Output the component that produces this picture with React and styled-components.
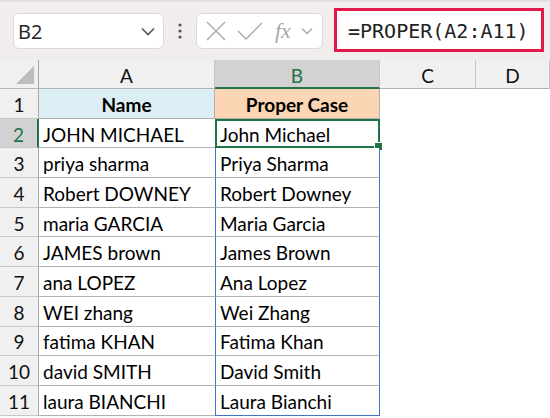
import React from 'react';
import styled, { createGlobalStyle, css } from 'styled-components';

const GREEN = '#217346';
const COLS = '39px 176px 165px 96px 1fr';

const GlobalStyle = createGlobalStyle`
  html, body {
    margin: 0;
    padding: 0;
    background: #ffffff;
    overflow: hidden;
  }
`;

const Page = styled.div`
  width: 550px;
  height: 418px;
  overflow: hidden;
  font-family: Lato, 'Noto Sans', sans-serif;
  color: #000;
`;

const FormulaBar = styled.div`
  height: 60px;
  box-sizing: border-box;
  background: #f1eded;
  border-top: 2px solid #e4e0e0;
  display: flex;
  align-items: center;
  padding-left: 13px;
`;

const Box = styled.div`
  height: 36px;
  box-sizing: border-box;
  background: #ffffff;
  border: 1px solid #dcd8d8;
  border-radius: 6px;
  display: flex;
  align-items: center;
`;

const NameBox = styled(Box)`
  width: 151px;
  padding: 0 8px 0 4px;
  justify-content: space-between;
  font-family: 'Open Sans', sans-serif;
  font-size: 20px;
  color: #222;
`;

const Dots = styled.div`
  width: 32px;
  display: flex;
  justify-content: center;
`;

const FxBox = styled(Box)`
  width: 127px;
  padding: 0 6px 0 8px;
  gap: 10px;
  color: #a8a8a8;
`;

const FxGlyph = styled.span`
  font-family: 'Liberation Serif', serif;
  font-style: italic;
  font-size: 22px;
  color: #a8a8a8;
  margin-left: 2px;
`;

const FormulaInput = styled.div`
  margin-left: 11px;
  width: 210px;
  height: 44px;
  box-sizing: border-box;
  border: 3px solid #e0194a;
  background: #ffffff;
  display: flex;
  align-items: center;
  padding-left: 11px;
  padding-top: 1px;
  font-family: 'DejaVu Sans Mono', monospace;
  font-size: 20px;
  color: #222;
  margin-top: -2px;
`;

const Row = styled.div`
  display: grid;
  grid-template-columns: ${COLS};
  height: ${(p) => p.$h};
`;

const ColHead = styled.div`
  background: ${(p) => (p.$active ? '#d2d2d2' : '#f0f0f0')};
  color: ${(p) => (p.$active ? GREEN : '#111')};
  border-right: 1px solid #c6c6c6;
  border-bottom: ${(p) => (p.$active ? `2px solid ${GREEN}` : '1px solid #b4b4b4')};
  box-sizing: border-box;
  display: flex;
  align-items: center;
  justify-content: center;
  padding-top: 3px;
  font-size: 19px;
  position: relative;
`;

const Corner = styled(ColHead)`
  border-right: 1px solid #a8a8a8;
`;

const Triangle = styled.div`
  position: absolute;
  right: 4px;
  bottom: 4px;
  width: 0;
  height: 0;
  border-left: 18px solid transparent;
  border-bottom: 18px solid #bdbdbd;
`;

const RowHead = styled.div`
  background: ${(p) => (p.$active ? '#d2d2d2' : '#f0f0f0')};
  color: ${(p) => (p.$active ? GREEN : '#111')};
  border-bottom: 1px solid #c6c6c6;
  border-right: ${(p) => (p.$active ? `2px solid ${GREEN}` : '1px solid #a8a8a8')};
  box-sizing: border-box;
  display: flex;
  align-items: center;
  justify-content: center;
  padding-top: 2px;
  font-size: 19px;
`;

const Cell = styled.div`
  box-sizing: border-box;
  border-bottom: 1px solid #b0b0b0;
  display: flex;
  align-items: center;
  padding: 2px 0 0 4px;
  font-size: 19px;
  white-space: nowrap;
  position: relative;
  background: ${(p) => p.$bg || '#ffffff'};
  ${(p) =>
    p.$head &&
    css`
      justify-content: center;
      padding-left: 0;
      font-weight: bold;
      border-right: 1px solid #b0b0b0;
    `}
  ${(p) =>
    p.$range &&
    css`
      border-left: 1px solid #4472c4;
      border-right: 1px solid #4472c4;
    `}
  ${(p) =>
    p.$last &&
    css`
      border-bottom: 1px solid #4472c4;
    `}
  ${(p) =>
    p.$selected &&
    css`
      border: 2px solid ${GREEN};
      padding-left: 3px;
    `}
`;

const Blank = styled.div`
  background: #ffffff;
`;

const FillHandle = styled.div`
  position: absolute;
  right: -5px;
  bottom: -5px;
  width: 7px;
  height: 7px;
  background: ${GREEN};
  border: 1px solid #ffffff;
`;

const Chevron = () => (
  <svg width="14" height="9" viewBox="0 0 14 9">
    <path d="M1 1.5 L7 7.5 L13 1.5" fill="none" stroke="#555" strokeWidth="1.6" />
  </svg>
);

const names = [
  ['JOHN MICHAEL', 'John Michael'],
  ['priya sharma', 'Priya Sharma'],
  ['Robert DOWNEY', 'Robert Downey'],
  ['maria GARCIA', 'Maria Garcia'],
  ['JAMES brown', 'James Brown'],
  ['ana LOPEZ', 'Ana Lopez'],
  ['WEI zhang', 'Wei Zhang'],
  ['fatima KHAN', 'Fatima Khan'],
  ['david SMITH', 'David Smith'],
  ['laura BIANCHI', 'Laura Bianchi'],
];

export default function App() {
  return (
    <Page>
      <GlobalStyle />
      <FormulaBar>
        <NameBox>
          <span>B2</span>
          <Chevron />
        </NameBox>
        <Dots>
          <svg width="4" height="16" viewBox="0 0 4 16">
            <circle cx="2" cy="2" r="1.6" fill="#555" />
            <circle cx="2" cy="8" r="1.6" fill="#555" />
            <circle cx="2" cy="14" r="1.6" fill="#555" />
          </svg>
        </Dots>
        <FxBox>
          <svg width="22" height="22" viewBox="0 0 22 22">
            <path d="M2 2 L20 20 M20 2 L2 20" stroke="#a8a8a8" strokeWidth="1.4" fill="none" />
          </svg>
          <svg width="26" height="20" viewBox="0 0 26 20">
            <path d="M1 10 L9 18 L25 2" stroke="#a8a8a8" strokeWidth="1.4" fill="none" />
          </svg>
          <FxGlyph>fx</FxGlyph>
          <svg width="12" height="8" viewBox="0 0 12 8">
            <path d="M1 1.5 L6 6.5 L11 1.5" fill="none" stroke="#a8a8a8" strokeWidth="1.4" />
          </svg>
        </FxBox>
        <FormulaInput>=PROPER(A2:A11)</FormulaInput>
      </FormulaBar>

      <Row $h="29px">
        <Corner>
          <Triangle />
        </Corner>
        <ColHead>A</ColHead>
        <ColHead $active>B</ColHead>
        <ColHead>C</ColHead>
        <ColHead>D</ColHead>
      </Row>

      <Row $h="29.7px">
        <RowHead>1</RowHead>
        <Cell $head $bg="#daeef3">Name</Cell>
        <Cell $head $bg="#fcd5b4">Proper Case</Cell>
        <Blank />
        <Blank />
      </Row>

      {names.map(([raw, proper], i) => (
        <Row $h="29.7px" key={raw}>
          <RowHead $active={i === 0}>{i + 2}</RowHead>
          <Cell>{raw}</Cell>
          <Cell $range $selected={i === 0} $last={i === names.length - 1}>
            {proper}
            {i === 0 && <FillHandle />}
          </Cell>
          <Blank />
          <Blank />
        </Row>
      ))}
    </Page>
  );
}
